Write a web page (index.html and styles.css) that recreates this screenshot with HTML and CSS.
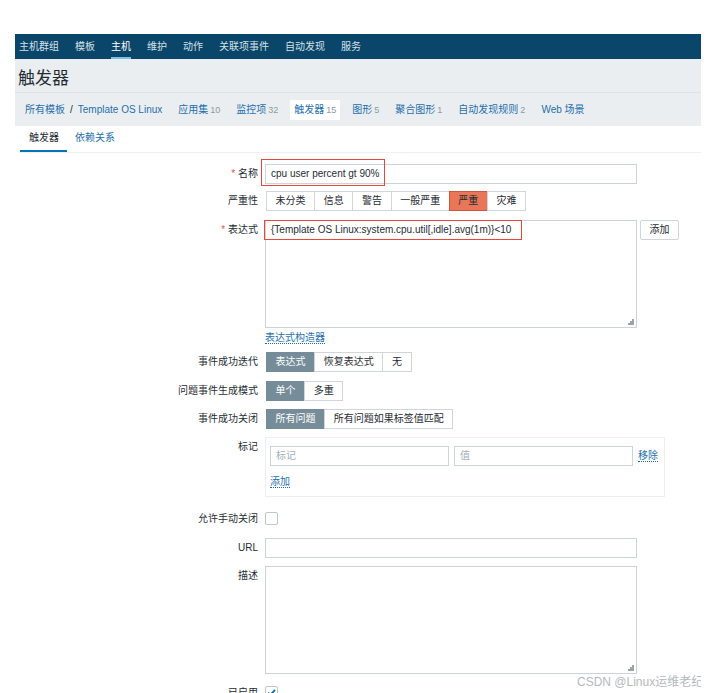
FILE: index.html
```html
<!DOCTYPE html>
<html lang="zh-CN">
<head>
<meta charset="utf-8">
<title>触发器</title>
<link rel="stylesheet" href="styles.css">
</head>
<body>
<div class="page">
  <nav class="topnav">
    <a>主机群组</a><a>模板</a><a class="active">主机</a><a>维护</a><a>动作</a><a>关联项事件</a><a>自动发现</a><a>服务</a>
  </nav>
  <header class="header"><h1>触发器</h1></header>
  <div class="crumbs">
    <span class="crumb"><a>所有模板</a><span class="sep">/</span><a>Template OS Linux</a></span>
    <a class="crumb">应用集<span class="cnt">10</span></a>
    <a class="crumb">监控项<span class="cnt">32</span></a>
    <a class="crumb current">触发器<span class="cnt">15</span></a>
    <a class="crumb">图形<span class="cnt">5</span></a>
    <a class="crumb">聚合图形<span class="cnt">1</span></a>
    <a class="crumb">自动发现规则<span class="cnt">2</span></a>
    <a class="crumb">Web 场景</a>
  </div>
  <div class="panel">
    <div class="subtabs">
      <span class="subtab active">触发器</span><span class="subtab">依赖关系</span>
    </div>
    <div class="form">
      <div class="row r-name">
        <div class="lbl"><span class="req">*</span> 名称</div>
        <div class="field">
          <div class="input">cpu user percent gt 90%</div>
          <span class="mark mark-name"></span>
        </div>
      </div>
      <div class="row r-sev">
        <div class="lbl">严重性</div>
        <div class="field seg">
          <span>未分类</span><span>信息</span><span>警告</span><span>一般严重</span><span class="sev-on">严重</span><span>灾难</span>
        </div>
      </div>
      <div class="row r-expr">
        <div class="lbl"><span class="req">*</span> 表达式</div>
        <div class="field">
          <div class="expr-line">
            <div class="ta ta-expr">{Template OS Linux:system.cpu.util[,idle].avg(1m)}&lt;10<span class="grip"></span><span class="mark mark-expr"></span></div>
            <span class="btn">添加</span>
          </div>
          <a class="link builder">表达式构造器</a>
        </div>
      </div>
      <div class="row r-iter">
        <div class="lbl">事件成功迭代</div>
        <div class="field seg">
          <span class="on">表达式</span><span>恢复表达式</span><span>无</span>
        </div>
      </div>
      <div class="row r-mode">
        <div class="lbl">问题事件生成模式</div>
        <div class="field seg">
          <span class="on">单个</span><span>多重</span>
        </div>
      </div>
      <div class="row r-close">
        <div class="lbl">事件成功关闭</div>
        <div class="field seg">
          <span class="on">所有问题</span><span>所有问题如果标签值匹配</span>
        </div>
      </div>
      <div class="row r-tags">
        <div class="lbl">标记</div>
        <div class="field">
          <div class="tags">
            <div class="tag-line">
              <div class="input tag-in ph">标记</div>
              <div class="input val-in ph">值</div>
              <a class="link rm">移除</a>
            </div>
            <a class="link add">添加</a>
          </div>
        </div>
      </div>
      <div class="row r-manual">
        <div class="lbl">允许手动关闭</div>
        <div class="field"><span class="cb"></span></div>
      </div>
      <div class="row r-url">
        <div class="lbl">URL</div>
        <div class="field"><div class="input"></div></div>
      </div>
      <div class="row r-desc">
        <div class="lbl">描述</div>
        <div class="field"><div class="ta ta-desc"><span class="grip"></span></div></div>
      </div>
      <div class="row r-enabled">
        <div class="lbl">已启用</div>
        <div class="field"><span class="cb checked"><svg width="11" height="11" viewBox="0 0 11 11"><path d="M2 5.6 L4.4 8 L9 2.8" fill="none" stroke="#0275b8" stroke-width="1.8"/></svg></span></div>
      </div>
    </div>
  </div>
  <div class="watermark">CSDN @Linux运维老纪</div>
</div>
</body>
</html>
```
FILE: styles.css
```css
html, body {
  margin: 0;
  padding: 0;
  background: #ffffff;
}
body {
  font-family: "Liberation Sans", "Noto Sans CJK SC", sans-serif;
  font-size: 10px;
  color: #1f2c33;
  overflow: hidden;
}
.page {
  position: relative;
  margin: 34px 0 0 15px;
  width: 686px;
  height: 659px;
  overflow: hidden;
}
a { text-decoration: none; cursor: pointer; }

/* top navigation */
.topnav {
  height: 25px;
  background: #0a466a;
  display: flex;
  gap: 16px;
  padding-left: 4px;
}
.topnav a {
  position: relative;
  color: #d6e0e7;
  line-height: 26px;
}
.topnav a.active { color: #ffffff; }
.topnav a.active::after {
  content: "";
  position: absolute;
  left: 0;
  right: 0;
  bottom: 0;
  height: 2px;
  background: #7cc0ec;
}

/* header */
.header {
  height: 33px;
  background: #ebeef0;
  border-bottom: 1px solid #dde2e5;
  padding-left: 3px;
  display: flex;
  align-items: center;
}
.header h1 {
  margin: 2px 0 0 0;
  font-size: 17px;
  font-weight: normal;
  color: #1f2c33;
}

/* breadcrumbs / tabs */
.crumbs {
  height: 33px;
  background: #ebeef0;
  display: flex;
  align-items: center;
  gap: 8px;
  padding-left: 6px;
}
.crumb {
  color: #1f6fae;
  padding: 4px 4px;
  line-height: 11px;
}
.crumb a { color: #1f6fae; }
.crumb .sep { color: #1f2c33; margin: 0 5px; }
.crumb.current { background: #ffffff; }
.cnt {
  color: #8a9ba4;
  font-size: 9px;
  margin-left: 2px;
}

/* panel */
.panel {
  background: #ffffff;
  margin-left: 4px;
}
.subtabs {
  height: 26px;
  display: flex;
  border-bottom: 1px solid #eef0f2;
}
.subtab {
  padding: 0 8px;
  line-height: 24px;
  border-bottom: 2px solid transparent;
  color: #1f6fae;
}
.subtab.active {
  color: #1f2c33;
  border-bottom-color: #0275b8;
  margin-left: 1px;
  padding-left: 9px;
}

/* form */
.form { padding-top: 11px; }
.row {
  display: flex;
  align-items: flex-start;
  margin-bottom: 8px;
}
.lbl {
  width: 239px;
  margin-right: 7px;
  flex: none;
  text-align: right;
  line-height: 20px;
  color: #1f2c33;
}
.req { color: #e45959; }
.field { position: relative; }

.input {
  width: 372px;
  height: 20px;
  box-sizing: border-box;
  border: 1px solid #cdd4d8;
  background: #ffffff;
  padding: 0 5px;
  line-height: 18px;
  color: #1f2c33;
  white-space: nowrap;
}
.ph { color: #a4b1b8; }

.mark {
  position: absolute;
  border: 1.5px solid #e8453c;
  box-sizing: border-box;
  pointer-events: none;
}
.mark-name { left: -4px; top: -5px; width: 124px; height: 27px; }
.mark-expr { left: -2px; top: -1px; width: 258px; height: 20px; }

.seg { display: flex; padding-left: 1px; }
.seg span {
  border: 1px solid #cfd5d9;
  margin-left: -1px;
  padding: 0 8.6px;
  height: 20px;
  box-sizing: border-box;
  line-height: 18px;
  background: #ffffff;
  color: #1f2c33;
}
.seg span:first-child { margin-left: 0; }
.seg span.on {
  background: #768d99;
  border-color: #768d99;
  color: #ffffff;
}
.seg span.sev-on {
  background: #e97659;
  border-color: #c85a40;
  color: #1f2c33;
}

.r-name { margin-bottom: 7px; }
.r-sev { margin-bottom: 9px; }

.expr-line { display: flex; align-items: flex-start; }
.ta {
  position: relative;
  width: 372px;
  box-sizing: border-box;
  border: 1px solid #cdd4d8;
  background: #ffffff;
  padding: 2px 5px;
  line-height: 14px;
  white-space: nowrap;
}
.ta-expr { height: 108px; }
.ta-desc { height: 108px; }
.grip {
  position: absolute;
  right: 2px;
  bottom: 2px;
  width: 6px;
  height: 6px;
  background:
    radial-gradient(circle, #9aa5ab 0.8px, transparent 1px) 4px 0 / 2px 2px no-repeat,
    radial-gradient(circle, #9aa5ab 0.8px, transparent 1px) 2px 2px / 2px 2px no-repeat,
    radial-gradient(circle, #9aa5ab 0.8px, transparent 1px) 4px 2px / 2px 2px no-repeat,
    radial-gradient(circle, #9aa5ab 0.8px, transparent 1px) 0 4px / 2px 2px no-repeat,
    radial-gradient(circle, #9aa5ab 0.8px, transparent 1px) 2px 4px / 2px 2px no-repeat,
    radial-gradient(circle, #9aa5ab 0.8px, transparent 1px) 4px 4px / 2px 2px no-repeat;
}
.btn {
  margin-left: 3px;
  width: 39px;
  height: 20px;
  box-sizing: border-box;
  border: 1px solid #cfd5d9;
  border-radius: 2px;
  text-align: center;
  line-height: 18px;
  background: #ffffff;
  color: #1f2c33;
}
.link {
  color: #1f6fae;
  border-bottom: 1px dotted #1f6fae;
  line-height: 11px;
  display: inline-block;
}
.builder { margin-top: 4px; }
.r-expr { margin-bottom: 8px; }
.r-iter { margin-bottom: 9px; }

.tags {
  width: 400px;
  height: 60px;
  box-sizing: border-box;
  border: 1px solid #edf0f2;
  padding: 8px 0 0 4px;
}
.tag-line { display: flex; align-items: center; }
.tag-in { width: 179px; }
.val-in { width: 179px; margin-left: 5px; }
.rm { margin-left: 5px; }
.add { margin-top: 10px; }
.r-tags { margin-bottom: 12px; }

.cb {
  display: block;
  width: 13px;
  height: 13px;
  box-sizing: border-box;
  border: 1px solid #bfc7cc;
  border-radius: 2px;
  margin-top: 3px;
  background: #ffffff;
}
.cb svg { display: block; margin: 0; }
.r-manual { margin-bottom: 9px; }
.r-url { margin-bottom: 8px; }
.r-desc { margin-bottom: 9px; }

.watermark {
  position: absolute;
  left: 562px;
  top: 638px;
  font-size: 12px;
  color: #b4babe;
  white-space: nowrap;
}
```
